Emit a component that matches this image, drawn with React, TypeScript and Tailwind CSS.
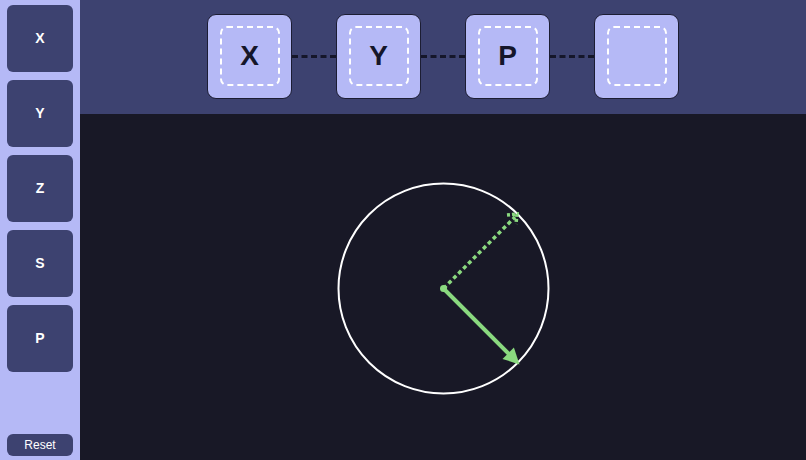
const SIDE = ['X', 'Y', 'Z', 'S', 'P'];
const SLOTS = ['X', 'Y', 'P', ''];

function Slot({ label }: { label: string }) {
  return (
    <div className="w-[85px] h-[85px] rounded-[9px] bg-[#b5b9f6] border border-[#1c1d33] flex items-center justify-center">
      <div className="w-[60px] h-[60px] rounded-[7px] border-2 border-dashed border-white flex items-center justify-center">
        <span className="text-[28px] font-bold text-[#15162a] leading-none">{label}</span>
      </div>
    </div>
  );
}

export default function App() {
  return (
    <div className="flex w-[806px] h-[460px] overflow-hidden" style={{ fontFamily: '"Liberation Sans", Arial, sans-serif' }}>
      <div className="w-[80px] shrink-0 bg-[#b5b9f6] flex flex-col px-[7px] pt-[5px] pb-[4px] gap-[8px]">
        {SIDE.map(s => (
          <button key={s} className="h-[67px] w-full rounded-[6px] bg-[#3d4270] text-white text-[14px] font-bold">{s}</button>
        ))}
        <button className="mt-auto h-[22px] w-full rounded-[6px] bg-[#3d4270] text-white text-[12px]">Reset</button>
      </div>
      <div className="flex-1 flex flex-col">
        <div className="h-[114px] shrink-0 bg-[#3d4270] flex items-center justify-center pb-[2px]">
          {SLOTS.map((s, i) => (
            <div key={i} className="flex items-center">
              {i > 0 && <div className="w-[44px] border-t-[3px] border-dashed border-[#15162a]" />}
              <Slot label={s} />
            </div>
          ))}
        </div>
        <div className="flex-1 bg-[#181826]">
          <svg width="726" height="346" viewBox="0 0 726 346">
            <circle cx="363.5" cy="174.5" r="105" fill="none" stroke="#ffffff" strokeWidth="2" />
            <line x1="363.5" y1="174.5" x2="435" y2="103" stroke="#8ad97f" strokeWidth="3.5" strokeDasharray="4 3" />
            <polyline points="427,101 437,100 436,110" fill="none" stroke="#8ad97f" strokeWidth="3.5" strokeDasharray="3 2" />
            <line x1="363.5" y1="174.5" x2="430" y2="241" stroke="#8ad97f" strokeWidth="4" />
            <polygon points="439.5,250.5 422.5,244.9 433.9,233.5" fill="#8ad97f" />
            <circle cx="363.5" cy="174.5" r="3.5" fill="#8ad97f" />
          </svg>
        </div>
      </div>
    </div>
  );
}
